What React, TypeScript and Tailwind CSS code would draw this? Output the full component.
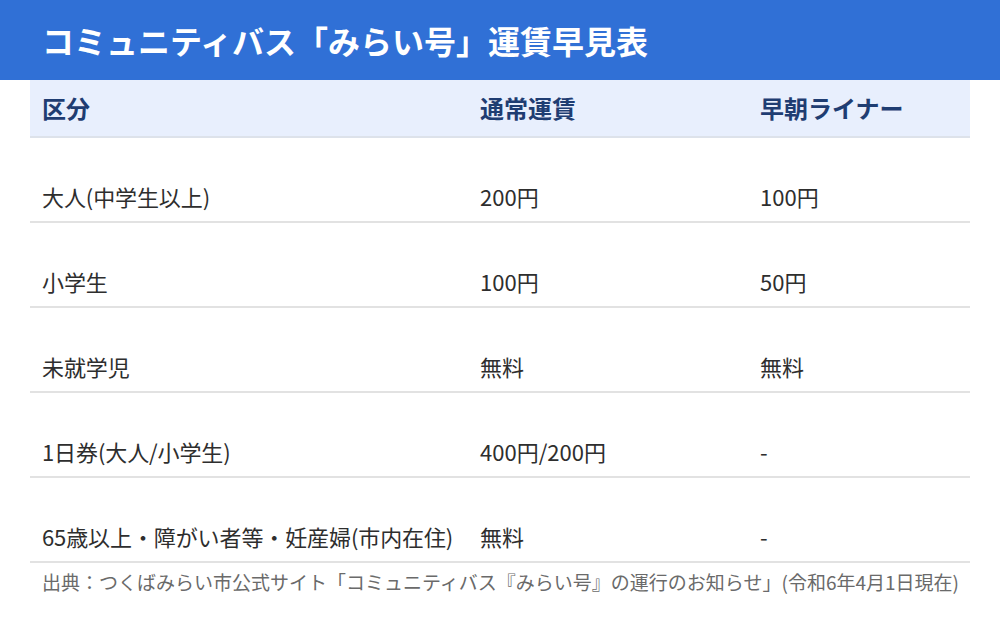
const rows = [
    { kind: '大人(中学生以上)', normal: '200円', early: '100円' },
    { kind: '小学生', normal: '100円', early: '50円' },
    { kind: '未就学児', normal: '無料', early: '無料' },
    { kind: '1日券(大人/小学生)', normal: '400円/200円', early: '-' },
    { kind: '65歳以上・障がい者等・妊産婦(市内在住)', normal: '無料', early: '-' },
]

const FareTable = () => {
    return (
        <div className="w-[1000px] h-[620px] bg-white font-['Noto_Sans_CJK_JP',sans-serif]">
            <div className="h-[80px] bg-[#3070d6] flex items-center px-[42px]">
                <h1 className="text-white text-[32px] font-bold leading-none">コミュニティバス「みらい号」運賃早見表</h1>
            </div>
            <div className="px-[30px]">
                <table className="w-full border-collapse table-fixed">
                    <colgroup>
                        <col className="w-[438px]" />
                        <col className="w-[280px]" />
                        <col className="w-[222px]" />
                    </colgroup>
                    <thead>
                        <tr className="bg-[#e8effd] border-b-2 border-[#dde2ea]">
                            <th className="text-left px-3 h-[57px] text-[24px] leading-[36px] font-bold text-[#1f3d72]">区分</th>
                            <th className="text-left px-3 h-[57px] text-[24px] leading-[36px] font-bold text-[#1f3d72]">通常運賃</th>
                            <th className="text-left px-3 h-[57px] text-[24px] leading-[36px] font-bold text-[#1f3d72]">早朝ライナー</th>
                        </tr>
                    </thead>
                    <tbody>
                        {
                            rows.map((row, index) => (
                                <tr key={index} className="border-b-2 border-[#e2e2e2]">
                                    <td className="px-3 pt-[42px] pb-[8px] text-[22px] leading-[33px] text-[#2e2e2e] whitespace-nowrap tracking-[-0.1px]">{row.kind}</td>
                                    <td className="px-3 pt-[42px] pb-[8px] text-[22px] leading-[33px] text-[#2e2e2e]">{row.normal}</td>
                                    <td className="px-3 pt-[42px] pb-[8px] text-[22px] leading-[33px] text-[#2e2e2e]">{row.early}</td>
                                </tr>
                            ))
                        }
                    </tbody>
                </table>
                <p className="px-3 pt-[5px] text-[19px] leading-[28px] text-[#6a6a6a] whitespace-nowrap">
                    出典：つくばみらい市公式サイト「コミュニティバス『みらい号』の運行のお知らせ」(令和6年4月1日現在)
                </p>
            </div>
        </div>
    )
}

export default FareTable
